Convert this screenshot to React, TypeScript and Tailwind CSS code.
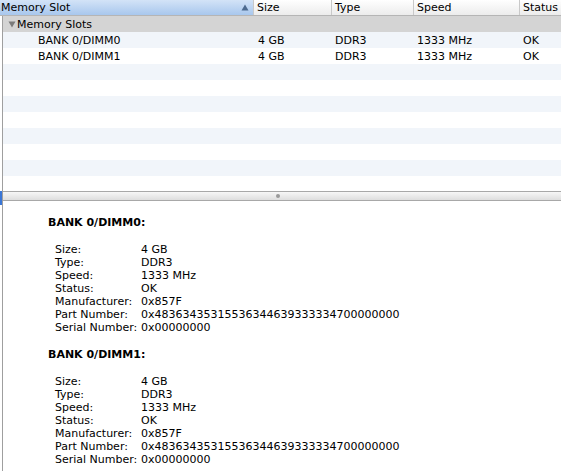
import React from 'react';

const slots = [
    { name: 'BANK 0/DIMM0', size: '4 GB', type: 'DDR3', speed: '1333 MHz', status: 'OK' },
    { name: 'BANK 0/DIMM1', size: '4 GB', type: 'DDR3', speed: '1333 MHz', status: 'OK' },
];

const details = (s: typeof slots[number]) => [
    ['Size:', s.size],
    ['Type:', s.type],
    ['Speed:', s.speed],
    ['Status:', s.status],
    ['Manufacturer:', '0x857F'],
    ['Part Number:', '0x48363435315536344639333334700000000'],
    ['Serial Number:', '0x00000000'],
];

function HeaderCell({ label, className }: { label: string; className: string }) {
    return (
        <div className={`h-full flex items-center border-l border-[#c9c9c9] pl-[3px] bg-gradient-to-b from-white to-[#ececec] ${className}`}>
            {label}
        </div>
    );
}

export default function App() {
    return (
        <div className="relative w-[561px] h-[471px] overflow-hidden bg-white text-black text-[11px] leading-[13px] font-['Lucida_Grande','DejaVu_Sans',sans-serif]">
            {/* column header */}
            <div className="flex h-[16px] border-b border-[#b5b5b5]">
                <div className="w-[253px] h-full flex items-center justify-between pl-[1px] pr-[4px] bg-gradient-to-b from-[#d3e3f7] to-[#a8c7ed]">
                    <span>Memory Slot</span>
                    <svg width="8" height="7" viewBox="0 0 8 7">
                        <path d="M4 0.5 L7.5 6.5 L0.5 6.5 Z" fill="#4d6a8f" />
                    </svg>
                </div>
                <HeaderCell label="Size" className="w-[78px]" />
                <HeaderCell label="Type" className="w-[82px]" />
                <HeaderCell label="Speed" className="w-[106px]" />
                <HeaderCell label="Status" className="flex-1" />
            </div>

            <div className="ml-[2px] border-l border-[#9f9f9f] flex flex-col h-[455px]">
                {/* table rows */}
                <div className="h-[175px] flex flex-col">
                    <div className="h-[16px] shrink-0 flex items-center bg-[#d4d4d4] pl-[5px] gap-[1px]">
                        <svg width="8" height="7" viewBox="0 0 8 7">
                            <path d="M0.5 0.5 L7.5 0.5 L4 6.5 Z" fill="#7b7b7b" />
                        </svg>
                        <span>Memory Slots</span>
                    </div>
                    {[0, 1, 2, 3, 4, 5, 6, 7, 8, 9].map((i) => {
                        const s = slots[i];
                        return (
                            <div key={i} className={`h-[16px] shrink-0 flex items-center ${i % 2 === 0 ? 'bg-[#f1f5fa]' : 'bg-white'}`}>
                                {s && (
                                    <>
                                        <div className="w-[250px] pl-[35px]">{s.name}</div>
                                        <div className="w-[78px] pl-[5px]">{s.size}</div>
                                        <div className="w-[82px] pl-[4px]">{s.type}</div>
                                        <div className="w-[106px] pl-[4px]">{s.speed}</div>
                                        <div className="flex-1 pl-[4px]">{s.status}</div>
                                    </>
                                )}
                            </div>
                        );
                    })}
                </div>

                {/* split bar */}
                <div className="h-[10px] shrink-0 border-y border-[#a8a8a8] bg-gradient-to-b from-[#f7f7f7] to-[#dedede] flex items-center justify-center">
                    <div className="w-[4px] h-[4px] rounded-full bg-[#9a9a9a] ml-[-8px]" />
                </div>

                {/* detail pane */}
                <div className="flex-1 pt-[15px] pl-[45px] flex flex-col gap-[14px]">
                    {slots.map((s) => (
                        <React.Fragment key={s.name}>
                            <div className="font-bold">{s.name}:</div>
                            <div className="pl-[7px] flex flex-col">
                                {details(s).map(([k, v]) => (
                                    <div key={k} className="flex">
                                        <span className="w-[86px] shrink-0">{k}</span>
                                        <span>{v}</span>
                                    </div>
                                ))}
                            </div>
                        </React.Fragment>
                    ))}
                </div>
            </div>

            {/* blue edge mark next to split bar */}
            <div className="absolute left-0 top-[191px] w-[2px] h-[14px] bg-[#3a76d6]" />
        </div>
    );
}
